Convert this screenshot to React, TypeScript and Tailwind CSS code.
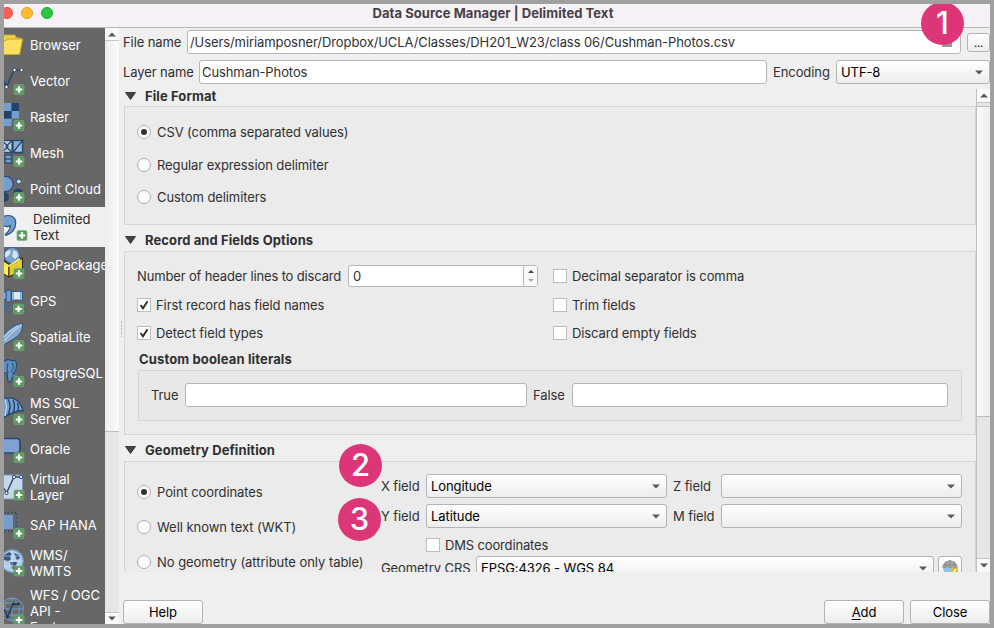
import React from "react";

function Plus({ x, y }: { x: number; y: number }) {
  return (
    <g>
      <rect x={x} y={y} width="10" height="10" rx="1.5" fill="#5a9a5e" stroke="#7fae7f" strokeWidth="0.6" />
      <path d={`M${x + 5} ${y + 1.8}v6.4M${x + 1.8} ${y + 5}h6.4`} stroke="#fff" strokeWidth="2.2" />
    </g>
  );
}

const icons: Record<string, React.ReactNode> = {
  browser: (
    <g stroke="#c9a92c" strokeWidth="1">
      <path d="M-1 8h12l1.500 3h4v14H-1z" fill="#f0cf4a" />
      <path d="M-1 14.500L5 12h13.700L15.500 27.500H-1z" fill="#fbdf5f" />
    </g>
  ),
  vector: (
    <g>
      <path d="M-2 14L2.500 24L10 7H18" fill="none" stroke="#29486b" strokeWidth="1.700" />
      <circle cx="2.500" cy="24" r="1.700" fill="#fff" stroke="#29486b" />
      <circle cx="10.500" cy="7" r="1.700" fill="#fff" stroke="#29486b" />
      <circle cx="17.500" cy="7" r="1.700" fill="#fff" stroke="#29486b" />
      <Plus x={10} y={21.500} />
    </g>
  ),
  raster: (
    <g>
      <path d="M0 4h7.500v8H0zM7.500 12H15v7.500H7.500zM0 19.500h7.500V27H0z" fill="#729fcf" />
      <path d="M7.500 4H15v8H7.500zM0 12h7.500v7.500H0z" fill="#234269" />
      <Plus x={10} y={21.500} />
    </g>
  ),
  mesh: (
    <g>
      <g stroke="#28496f" strokeWidth="1.300">
        <rect x="-2" y="5.500" width="10" height="12" fill="#bcd0e6" />
        <path d="M-2 5.500L4 11.500L-2 17.500M8 5.500L2 11.500L8 17.500" fill="none" />
        <rect x="9" y="5.500" width="9.500" height="12" fill="#87acd4" />
        <path d="M9 17.500L18.500 5.500V17.500z" fill="#9dbcdc" />
        <rect x="1" y="20" width="6.500" height="8" fill="#729fcf" />
        <path d="M1 24h6.500" />
      </g>
      <Plus x={10} y={21.500} />
    </g>
  ),
  cloud: (
    <g>
      <circle cx="0" cy="26" r="5" fill="#25466c" />
      <circle cx="14" cy="22.500" r="5" fill="#25466c" />
      <circle cx="1.500" cy="13" r="7.700" fill="#729fcf" stroke="#28496f" strokeWidth="1.200" />
      <circle cx="14.800" cy="10.500" r="2.500" fill="#c3d6ea" stroke="#28496f" />
      <Plus x={10} y={21.500} />
    </g>
  ),
  comma: (
    <g>
      <path d="M-2 10C6 6.500 11.700 9.500 11.700 16C11.700 22.500 7 27 2 28.500L1.500 27C5 24.500 6.500 21.500 6.300 18.500C4 20.500 1 19.500-2 18z" fill="#729fcf" stroke="#2b527d" strokeWidth="1.200" />
      <Plus x={13} y={23.500} />
    </g>
  ),
  geopackage: (
    <g>
      <path d="M-2 13.500L6 9L18.500 11L5 19.500z" fill="#3b3a14" />
      <path d="M-2 14.500L5 19.500V30L-2 26z" fill="#fff04c" stroke="#222" />
      <path d="M5 19.500L18.500 11V23L5 30z" fill="#e3cb2c" stroke="#222" />
      <circle cx="8" cy="8.500" r="8" fill="#78a3cc" stroke="#385f8a" />
      <path d="M1 6q3-4 6-2l-1 3-3 3-2 0M9 3l4 2 1 4-3 3-3-3 1-3z" fill="#d8e5ef" />
      <path d="M-2 14.500L5 19L16 12" fill="none" stroke="#fff27a" strokeWidth="1.500" />
      <Plus x={10} y={21.500} />
    </g>
  ),
  gps: (
    <g>
      <rect x="2" y="7" width="5" height="12" rx="1.5" fill="#729fcf" stroke="#284a70" />
      <rect x="-4" y="9" width="6" height="7" fill="#8fb2d8" stroke="#375d88" />
      <rect x="7.500" y="8.500" width="11" height="8.500" fill="#dde8f2" stroke="#375d88" />
      <path d="M9 9v7.500M17 9v7.500" stroke="#8fb2d8" strokeWidth="2" />
      <path d="M-1 20Q3 24 8 21.500M-1 23.500Q4 27 9 25M2 28Q5 30 8 29" fill="none" stroke="#3f6a98" strokeWidth="1.200" />
      <Plus x={9.500} y={21} />
    </g>
  ),
  feather: (
    <g>
      <path d="M18.500 4C11 5 3 11-2 18L-2 27C5 22 15 19 18 11z" fill="#86abcf" stroke="#2b4e75" />
      <path d="M18 6Q8 12-2 24M14 7Q5 12-2 20" fill="none" stroke="#e4edf5" strokeWidth=".8" />
      <Plus x={10} y={21.500} />
    </g>
  ),
  elephant: (
    <g>
      <path d="M-1 7Q4 3 8 6Q12 4 12.500 9Q13 15 9 18.500L8 24Q6 29 4 26L3 18L-1 18z" fill="#5e90c1" stroke="#284a70" strokeWidth="1.200" />
      <path d="M4 8Q2 14 4 18M8 8Q11 12 7 17" fill="none" stroke="#284a70" />
      <path d="M8 21L13 20" stroke="#4f83b7" strokeWidth="2" />
      <Plus x={10} y={21.500} />
    </g>
  ),
  shell: (
    <g>
      <path d="M-1 7.500Q15 4 19 19.500Q9 20-1 27z" fill="#729fcf" stroke="#244870" strokeWidth="1.300" />
      <path d="M4 8Q8 15 4 24M9 9Q12 15 9 22M13.500 12Q15 16 14 20" fill="none" stroke="#244870" strokeWidth="1.400" />
      <path d="M1 8.500Q4 16 1 25" fill="none" stroke="#d6e3ef" />
      <Plus x={10} y={23.500} />
    </g>
  ),
  oracle: (
    <g>
      <rect x="-10" y="7.500" width="26" height="14.500" rx="3.500" fill="#80a2d3" stroke="#28466f" strokeWidth="1.600" />
      <Plus x={10} y={21.500} />
    </g>
  ),
  virtual: (
    <g>
      <rect x="-2" y="8" width="20.500" height="24" fill="#c5d7e9" stroke="#7899bb" />
      <path d="M-2 18L2.500 26L10 10H17" fill="none" stroke="#29486b" strokeWidth="1.400" />
      <circle cx="2.500" cy="26" r="1.600" fill="#fff" stroke="#29486b" />
      <circle cx="10" cy="10" r="1.600" fill="#fff" stroke="#29486b" />
      <circle cx="17" cy="10" r="1.600" fill="#fff" stroke="#29486b" />
      <Plus x={10} y={23} />
    </g>
  ),
  hana: (
    <g>
      <rect x="-2" y="8" width="11" height="14" fill="#729fcf" />
      <path d="M0 5.500H12.500V24.500H0" fill="none" stroke="#2b4a6f" strokeWidth="1.300" strokeDasharray="1.500 2" />
      <Plus x={10} y={21.500} />
    </g>
  ),
  wms: (
    <g>
      <circle cx="8" cy="18" r="11.200" fill="#b5cde6" stroke="#6d97c4" strokeWidth="1.400" />
      <path d="M0 12l5-3 3 2-2 3 1 2-3 3-4-2zM10 10l5 2 1 3-3 2zM6 19h7l-1 4-2 4-2-1-1-4z" fill="#36587f" />
      <path d="M-3 18H19M8 7V29M-1 13H17M-1 23H17" fill="none" stroke="#dce8f3" strokeWidth=".6" />
      <Plus x={10} y={23} />
    </g>
  ),
  wfs: (
    <g>
      <path d="M8 15a11.300 11.300 0 1 0 .1 0M8 15V38M-3 26H19M8 15C-2 20-2 32 8 38C18 32 18 20 8 15M-1 20H17M-1 32H17" fill="none" stroke="#6f9dcb" strokeWidth="1" />
      <path d="M0 26L3.500 34L9 21H15" fill="none" stroke="#1e3654" strokeWidth="1.400" />
      <circle cx="3.500" cy="34" r="1.400" fill="#1e3654" />
      <circle cx="9" cy="21" r="1.400" fill="#1e3654" />
      <circle cx="14.500" cy="21" r="1.400" fill="#1e3654" />
      <Plus x={10} y={32} />
    </g>
  ),
};

const items: { icon: string; lines: string[]; h: string; active?: boolean }[] = [
  { icon: "browser", lines: ["Browser"], h: "h-9" },
  { icon: "vector", lines: ["Vector"], h: "h-9" },
  { icon: "raster", lines: ["Raster"], h: "h-9" },
  { icon: "mesh", lines: ["Mesh"], h: "h-9" },
  { icon: "cloud", lines: ["Point Cloud"], h: "h-9" },
  { icon: "comma", lines: ["Delimited", "Text"], h: "h-10", active: true },
  { icon: "geopackage", lines: ["GeoPackage"], h: "h-9" },
  { icon: "gps", lines: ["GPS"], h: "h-9" },
  { icon: "feather", lines: ["SpatiaLite"], h: "h-9" },
  { icon: "elephant", lines: ["PostgreSQL"], h: "h-9" },
  { icon: "shell", lines: ["MS SQL", "Server"], h: "h-10" },
  { icon: "oracle", lines: ["Oracle"], h: "h-9" },
  { icon: "virtual", lines: ["Virtual", "Layer"], h: "h-10" },
  { icon: "hana", lines: ["SAP HANA"], h: "h-9" },
  { icon: "wms", lines: ["WMS/", "WMTS"], h: "h-10" },
  { icon: "wfs", lines: ["WFS / OGC", "API -", "Feature"], h: "h-14" },
];

function Sidebar() {
  return (
    <div className="h-full w-[101px] shrink-0 overflow-hidden bg-[#676767]">
      <div className="-mt-px flex flex-col">
        {items.map((it) => (
          <div key={it.icon} className={`flex shrink-0 items-center ${it.h} ${it.active ? "bg-[#efefef] text-[#2a2a2a]" : "text-white"}`}>
            <svg className={`h-full shrink-0 ${it.active ? "w-[29px]" : "w-[26px]"}`}>{icons[it.icon]}</svg>
            <div className="leading-4 tracking-[0px] whitespace-nowrap">
              {it.lines.map((l) => (
                <div key={l}>{l}</div>
              ))}
            </div>
          </div>
        ))}
      </div>
    </div>
  );
}

function Tri({ up, className = "" }: { up?: boolean; className?: string }) {
  return (
    <svg width="8" height="5" viewBox="0 0 8 5" className={`shrink-0 ${className}`}>
      <path d={up ? "M0 4.500L4 .5L8 4.500z" : "M0 .5H8L4 4.500z"} fill="currentColor" />
    </svg>
  );
}

const field = "rounded-[3px] border border-[#b6b6b6] bg-white";
const raised = "rounded-[3px] border border-[#b3b3b3] bg-linear-to-b from-white to-[#ededed] text-black";

function Combo({ value, className }: { value: string; className: string }) {
  return (
    <div className={`flex shrink-0 items-center justify-between pr-1.5 pl-1 ${raised} ${className}`}>
      <span className="whitespace-nowrap">{value}</span>
      <Tri className="text-[#5a5a5a]" />
    </div>
  );
}

function Radio({ label, on, className = "" }: { label: string; on?: boolean; className?: string }) {
  return (
    <div className={`flex items-center gap-1.5 whitespace-nowrap ${className}`}>
      <span className="flex size-3.5 shrink-0 items-center justify-center rounded-full border border-[#adadad] bg-white">
        {on && <span className="size-1.5 rounded-full bg-[#333]" />}
      </span>
      {label}
    </div>
  );
}

function Check({ label, on, className = "" }: { label: string; on?: boolean; className?: string }) {
  return (
    <div className={`flex items-center gap-[5px] whitespace-nowrap ${className}`}>
      <span className="flex size-3.5 shrink-0 items-center justify-center border border-[#bdbdbd] bg-white">
        {on && (
          <svg width="10" height="10" viewBox="0 0 10 10">
            <path d="M1.500 5L4 8.300L8.500 1.200" fill="none" stroke="#2d2d2d" strokeWidth="1.900" />
          </svg>
        )}
      </span>
      {label}
    </div>
  );
}

function GroupTitle({ children, className }: { children: string; className: string }) {
  return (
    <div className={`flex shrink-0 items-center gap-2 pl-0.5 font-bold tracking-[0.1px] ${className}`}>
      <svg width="11" height="8" viewBox="0 0 11 8" className="-ml-px mr-px">
        <path d="M0.500 .5H10.500L5.500 7.500z" fill="#444" stroke="#222" strokeWidth=".8" />
      </svg>
      {children}
    </div>
  );
}

function Step({ n, className }: { n: number; className: string }) {
  return (
    <div className={`absolute flex size-[43px] items-center justify-center rounded-full bg-[#dc3679] pb-0.5 text-[31px] leading-none font-medium tracking-normal text-white ${className}`}>
      {n}
    </div>
  );
}

const panel = "border border-[#d6d6d6] bg-[#ebebeb]";

export default function App() {
  return (
    <div className="relative flex h-[628px] w-[994px] flex-col overflow-hidden border-4 border-[#a0a0a0] bg-[#efefef] font-[Inter,sans-serif] text-[13px] leading-4 tracking-[-0.09px] text-[#303030]">
      <header className="relative flex h-[23px] shrink-0 items-center justify-center bg-[#f6f1f6] pr-2 pb-1.5 font-bold tracking-[0.06px] text-[#454145]">
        <div className="absolute top-[3px] -left-[3px] flex gap-2">
          <span className="size-3 rounded-full border border-[#e0443e] bg-[#fe5f57]" />
          <span className="size-3 rounded-full border border-[#dea123] bg-[#febc2e]" />
          <span className="size-3 rounded-full border border-[#1aab29] bg-[#28c840]" />
        </div>
        Data Source Manager | Delimited Text
      </header>
      <div className="flex min-h-0 flex-1 border-t border-[#b9b7b9]">
        <Sidebar />
        <div className="flex w-3.5 shrink-0 flex-col bg-[#e6e6e6]">
          <div className="flex h-[13px] items-center justify-center border-b border-[#c4c4c4] bg-[#f8f8f8] text-[#5a5a5a]">
            <Tri up />
          </div>
          <div className="h-[391px] border-b border-[#bdbdbd] bg-linear-to-r from-[#ececec] to-[#fcfcfc]" />
          <div className="flex-1" />
          <div className="flex h-3 items-center justify-center border-t border-[#c4c4c4] bg-[#f8f8f8] text-[#5a5a5a]">
            <Tri />
          </div>
        </div>
        <main className="flex min-w-0 flex-1 flex-col">
          <div className="mt-0.5 flex h-6 items-center pl-1">
            <span className="w-16 shrink-0">File name</span>
            <div className={`flex h-6 w-[774px] shrink-0 items-center justify-between pr-2 pl-0.5 ${field}`}>
              <span>/Users/miriamposner/Dropbox/UCLA/Classes/DH201_W23/class 06/Cushman-Photos.csv</span>
              <span className="h-2.5 w-2.5 bg-[#999]" />
            </div>
            <div className={`mt-px ml-1.5 flex h-[19px] w-[23px] items-center justify-center self-center text-[11px] ${raised}`}>...</div>
          </div>
          <div className="mt-1.5 flex h-6 items-center pl-1">
            <span className="w-[76px] shrink-0">Layer name</span>
            <div className={`flex h-6 w-[568px] items-center pl-0.5 ${field}`}>Cushman-Photos</div>
            <span className="ml-1.5 w-[63px]">Encoding</span>
            <Combo value="UTF-8" className="h-6 w-[154px]" />
          </div>
          <div className="mt-[5px] flex h-[483px] overflow-hidden">
            <div className="flex w-[5px] shrink-0 items-center pb-1 pl-0.5">
              <div className="h-4 border-l border-dotted border-[#aaa]" />
            </div>
            <div className="flex w-[852px] shrink-0 flex-col">
              <GroupTitle className="h-[17px] pb-1 leading-3">File Format</GroupTitle>
              <section className={`flex h-[119px] shrink-0 flex-col pt-[17px] pl-3 ${panel}`}>
                <Radio label="CSV (comma separated values)" on />
                <Radio label="Regular expression delimiter" className="mt-[17px]" />
                <Radio label="Custom delimiters" className="mt-4" />
              </section>
              <GroupTitle className="h-[26px] pt-1">Record and Fields Options</GroupTitle>
              <section className={`flex h-[184px] shrink-0 flex-col pl-3 ${panel}`}>
                <div className="mt-[13px] flex h-[22px] items-center">
                  <span className="w-[211px] tracking-[-0.15px] whitespace-nowrap">Number of header lines to discard</span>
                  <div className={`flex h-[22px] w-[190px] overflow-hidden ${field}`}>
                    <span className="flex flex-1 items-center pl-1">0</span>
                    <div className="flex w-3.5 flex-col items-center justify-center gap-1 border-l border-[#b6b6b6] bg-[#f8f8f8]">
                      <Tri up className="scale-75 text-[#444]" />
                      <Tri className="scale-75 text-[#aaa]" />
                    </div>
                  </div>
                  <Check label="Decimal separator is comma" className="ml-[15px]" />
                </div>
                <div className="mt-2.5 flex h-4">
                  <Check label="First record has field names" on className="w-[416px]" />
                  <Check label="Trim fields" />
                </div>
                <div className="mt-3 flex h-4">
                  <Check label="Detect field types" on className="w-[416px]" />
                  <Check label="Discard empty fields" />
                </div>
                <div className="mt-[10px] pl-0.5 font-bold tracking-[0.14px]">Custom boolean literals</div>
                <div className="mt-[3px] ml-px flex h-[51px] w-[824px] items-center border border-[#d6d6d6] bg-[#e8e8e8] pb-px pl-3">
                  <span className="w-[34px]">True</span>
                  <div className={`h-6 w-[342px] ${field}`} />
                  <span className="ml-1.5 w-[39px]">False</span>
                  <div className={`h-6 w-[376px] ${field}`} />
                </div>
              </section>
              <GroupTitle className="h-[26px] pt-1">Geometry Definition</GroupTitle>
              <section className={`flex h-[150px] shrink-0 pl-3 ${panel}`}>
                <div className="flex w-[244px] flex-col pt-[22px]">
                  <Radio label="Point coordinates" on />
                  <Radio label="Well known text (WKT)" className="mt-[19px] tracking-[-0.04px]" />
                  <Radio label="No geometry (attribute only table)" className="mt-[19px] tracking-[-0.04px]" />
                </div>
                <div className="flex flex-col pt-3">
                  <div className="flex h-6 items-center">
                    <span className="w-[45px]">X field</span>
                    <Combo value="Longitude" className="h-6 w-[241px]" />
                    <span className="ml-1.5 w-12">Z field</span>
                    <Combo value="" className="h-6 w-[241px]" />
                  </div>
                  <div className="mt-1.5 flex h-6 items-center">
                    <span className="w-[45px]">Y field</span>
                    <Combo value="Latitude" className="h-6 w-[241px]" />
                    <span className="ml-1.5 w-12">M field</span>
                    <Combo value="" className="h-6 w-[241px]" />
                  </div>
                  <Check label="DMS coordinates" className="mt-[9px] ml-[45px] tracking-[-0.15px]" />
                  <div className="mt-[3px] flex h-6 items-center">
                    <span className="w-[95px] whitespace-nowrap">Geometry CRS</span>
                    <Combo value="EPSG:4326 - WGS 84" className="h-6 w-[458px]" />
                    <div className={`ml-1 flex h-6 w-6 items-center justify-center ${raised}`}>
                      <svg width="16" height="16" viewBox="0 0 16 16">
                        <circle cx="8" cy="8" r="7" fill="#8dc3e8" />
                        <path d="M0 8Q1 1 8 0Q15 1 16 8z" fill="#a7a7a7" />
                        <path d="M1 5H15M8 0V8M4 1L3 8M12 1L13 8" stroke="#808080" strokeWidth=".7" />
                        <rect x="9" y="8" width="7" height="7" fill="#e0bd20" />
                        <path d="M11 13L14 9" stroke="#fff" strokeWidth="1.500" />
                      </svg>
                    </div>
                  </div>
                </div>
              </section>
            </div>
            <div className="flex w-3.5 shrink-0 flex-col border-l border-[#c0c0c0] bg-[#e6e6e6]">
              <div className="flex h-3.5 items-center justify-center border-b border-[#c4c4c4] bg-[#f8f8f8] text-[#5a5a5a]">
                <Tri up />
              </div>
              <div className="mt-[3px] h-[311px] border-y border-[#bdbdbd] bg-linear-to-r from-[#fcfcfc] to-[#ececec]" />
              <div className="flex-1" />
              <div className="flex h-3.5 items-center justify-center border-t border-[#c4c4c4] bg-[#f8f8f8] text-[#5a5a5a]">
                <Tri />
              </div>
            </div>
          </div>
          <div className="mt-7 flex shrink-0 justify-between pl-1">
            <div className={`flex h-6 w-20 items-center justify-center ${raised}`}>Help</div>
            <div className="flex gap-1.5">
              <div className={`flex h-6 w-20 items-center justify-center ${raised}`}>
                <span className="underline underline-offset-2">A</span>dd
              </div>
              <div className={`flex h-6 w-20 items-center justify-center ${raised}`}>Close</div>
            </div>
          </div>
        </main>
      </div>
      <Step n={1} className="-top-[2px] left-[917px]" />
      <Step n={2} className="top-[440px] left-[335px]" />
      <Step n={3} className="top-[494px] left-[334px]" />
    </div>
  );
}
